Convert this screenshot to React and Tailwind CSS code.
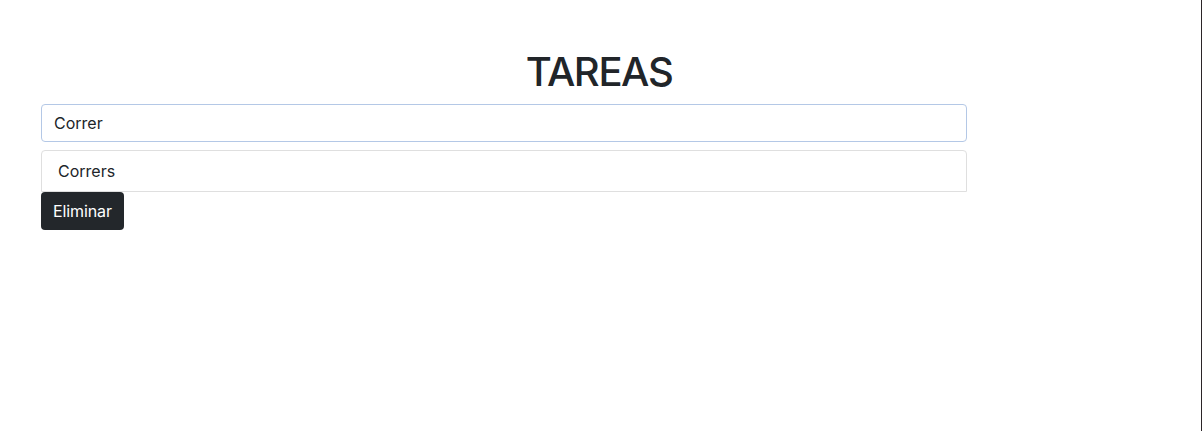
export default function App() {
    return (
        <div className="min-h-[431px] w-[1202px] border-r border-[#2b2528] bg-white font-['Inter','Liberation_Sans',sans-serif] text-[#212529]">
            <div className="pt-12 pl-[41px] w-[967px]">
                <h1 className="text-center text-[40px] leading-[48px] font-medium tracking-[-1.4px] mb-2 ml-[-41px] w-[1198px]">
                    TAREAS
                </h1>
                <input
                    type="text"
                    defaultValue="Correr"
                    className="block w-[926px] h-[38px] px-3 text-base text-[#212529] border border-[#b4c8e6] rounded outline-none"
                />
                <ul className="mt-2 w-[926px]">
                    <li className="h-[42px] px-4 flex items-center text-base border border-[#dfdfdf] rounded-t">
                        Corrers
                    </li>
                </ul>
                <button className="h-[38px] px-3 text-base tracking-[-0.1px] text-white bg-[#23272b] rounded">
                    Eliminar
                </button>
            </div>
        </div>
    );
}
